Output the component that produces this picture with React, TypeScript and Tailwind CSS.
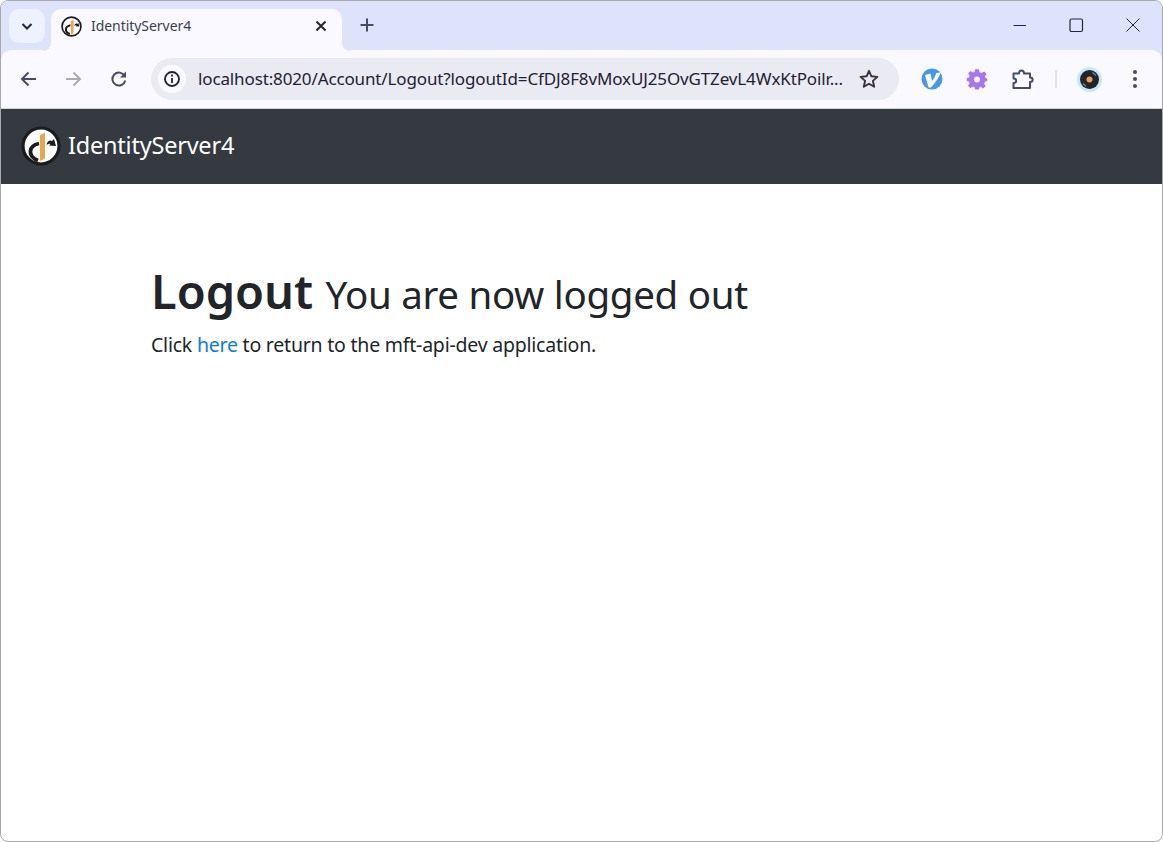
const ICON = "#474b68";

function Logo({ size }: { size: number }) {
  return (
    <svg width={size} height={size} viewBox="0 0 40 40" className="shrink-0">
      <circle cx="20" cy="20" r="18" fill="#fff" stroke="#1c1c1e" strokeWidth="3.2" />
      <path d="M18 17.5 C8 19.5 5.5 30 17 34.5" fill="none" stroke="#1c1c1e" strokeWidth="3.8" />
      <path d="M19 9 L24 6.5 L24 32.5 L19 35 Z" fill="#eda646" />
      <path d="M25.5 19 C26 15 29 13.5 31 15 L33 13 L35 20 L28 19.5 L29.5 18 C28 17.5 27 18 25.5 19 Z" fill="#1c1c1e" />
    </svg>
  );
}

function Tab() {
  return (
    <div className="relative ml-[6px] mt-2 flex h-[42px] w-[291px] items-center rounded-t-[10px] bg-[#f9f9ff] pb-2 pl-[10px] pr-[11px]">
      <div className="absolute bottom-0 left-[-8px] h-2 w-2 bg-[#f9f9ff]">
        <div className="h-2 w-2 rounded-br-[8px] bg-[#dde3fb]" />
      </div>
      <div className="absolute bottom-0 right-[-8px] h-2 w-2 bg-[#f9f9ff]">
        <div className="h-2 w-2 rounded-bl-[8px] bg-[#dde3fb]" />
      </div>
      <Logo size={21} />
      <span className="ml-[9px] flex-1 text-[14px] leading-none tracking-[-0.05px] text-[#3c3f4f]">IdentityServer4</span>
      <svg width="20" height="20" viewBox="0 0 20 20" fill="none" stroke="#23253a" strokeWidth="2">
        <path d="M5.5 5.5 L14.5 14.5 M14.5 5.5 L5.5 14.5" />
      </svg>
    </div>
  );
}

function TabStrip() {
  return (
    <div className="flex h-[49px] items-start bg-[#dde3fb]">
      <div className="ml-[8px] mt-2 flex h-[34px] w-[36px] items-center justify-center rounded-[10px] bg-[#eef1fe]">
        <svg width="16" height="16" viewBox="0 0 16 16" fill="none" stroke="#23253a" strokeWidth="2">
          <path d="M3.5 6 L8 10.5 L12.5 6" />
        </svg>
      </div>
      <Tab />
      <div className="ml-2 mt-[7px] flex h-[34px] w-[34px] items-center justify-center">
        <svg width="16" height="16" viewBox="0 0 16 16" fill="none" stroke={ICON} strokeWidth="2">
          <path d="M8 1.5 V14.5 M1.5 8 H14.5" />
        </svg>
      </div>
      <div className="ml-auto mr-px flex">
        <div className="flex h-[48px] w-[57px] items-center justify-center">
          <svg width="16" height="16" viewBox="0 0 16 16" fill="none" stroke="#23253a" strokeWidth="1">
            <path d="M2.5 8.5 H15" />
          </svg>
        </div>
        <div className="flex h-[48px] w-[57px] items-center justify-center">
          <svg width="16" height="16" viewBox="0 0 16 16" fill="none" stroke="#23253a" strokeWidth="1.2">
            <rect x="2" y="2" width="12.5" height="12.5" rx="1.5" />
          </svg>
        </div>
        <div className="flex h-[48px] w-[57px] items-center justify-center">
          <svg width="16" height="16" viewBox="0 0 16 16" fill="none" stroke="#23253a" strokeWidth="1">
            <path d="M1.5 1.5 L14.5 14.5 M14.5 1.5 L1.5 14.5" />
          </svg>
        </div>
      </div>
    </div>
  );
}

function Toolbar() {
  return (
    <div className="bg-[#dde3fb]">
      <div className="flex h-[59px] items-center rounded-t-[10px] border-b border-[#d5d5dc] bg-[#f9f9ff] pl-[10px] pr-[10px]">
        <div className="flex h-[36px] w-[36px] items-center justify-center">
          <svg width="20" height="20" viewBox="0 0 20 20" fill="none" stroke={ICON} strokeWidth="2">
            <path d="M17 10 H3.5 M9.5 3.5 L3 10 L9.5 16.5" />
          </svg>
        </div>
        <div className="ml-2 flex h-[36px] w-[36px] items-center justify-center">
          <svg width="20" height="20" viewBox="0 0 20 20" fill="none" stroke="#a9aab4" strokeWidth="2">
            <path d="M3 10 H16.5 M10.5 3.5 L17 10 L10.5 16.5" />
          </svg>
        </div>
        <div className="ml-[10px] flex h-[36px] w-[36px] items-center justify-center">
          <svg width="20" height="20" viewBox="0 0 20 20" fill="none" stroke={ICON} strokeWidth="2">
            <path d="M15.6 7 A6.5 6.5 0 1 0 16.2 11.5" />
            <path d="M17 2.5 V8.5 H11" fill={ICON} stroke="none" />
          </svg>
        </div>
        <div className="ml-[14px] flex h-[42px] w-[748px] items-center rounded-full bg-[#eaeaf2] pl-[7px] pr-[19px]">
          <div className="flex h-[28px] w-[28px] shrink-0 items-center justify-center rounded-full bg-[#f9f9ff]">
            <svg width="18" height="18" viewBox="0 0 18 18" fill="none" stroke="#1f2033" strokeWidth="1.8">
              <circle cx="9" cy="9" r="7" />
              <path d="M9 8 V13" />
              <path d="M9 4.6 V6.4" />
            </svg>
          </div>
          <span className="ml-3 flex-1 truncate whitespace-nowrap text-[17px] tracking-[-0.13px] text-[#1f2033]">
            localhost:8020/Account/Logout?logoutId=CfDJ8F8vMoxUJ25OvGTZevL4WxKtPoilr...
          </span>
          <svg width="22" height="22" viewBox="0 0 22 22" fill="none" stroke="#3b3038" strokeWidth="1.9" className="ml-[15px] shrink-0">
            <path d="M11 2.8 L13.4 8.3 L19.4 8.9 L14.9 12.9 L16.2 18.8 L11 15.7 L5.8 18.8 L7.1 12.9 L2.6 8.9 L8.6 8.3 Z" strokeLinejoin="round" />
          </svg>
        </div>
        <div className="ml-[21px] flex h-[24px] w-[24px] items-center justify-center">
          <svg width="22" height="22" viewBox="0 0 22 22">
            <circle cx="11" cy="11" r="10.5" fill="#4399ea" />
            <path d="M4 7 L9.5 5.5 L11 13 C13 10.5 15 7.5 15 5 L19.5 4.5 C18.5 9 14 15 10 19.5 L7.5 19.5 Z" fill="#fff" />
          </svg>
        </div>
        <div className="ml-[21px] flex h-[24px] w-[24px] items-center justify-center">
          <svg width="22" height="22" viewBox="0 0 22 22">
            <path fillRule="evenodd" fill="#a873f5" d="M9 1.2 H13 L13.6 4.2 L15.6 5 L18.2 3.4 L20.6 6 L18.8 8.4 L19.6 10 L21.2 10.6 V13 L18.9 13.8 L18.2 15.6 L19.6 18.2 L17.2 20.4 L14.8 18.8 L13.2 19.4 L12.8 21.6 H9.2 L8.6 19.2 L6.8 18.6 L4.4 20.2 L2 17.8 L3.6 15.4 L2.9 13.6 L0.8 13 V10 L3 9.4 L3.7 7.6 L2.2 5.2 L4.6 3 L7 4.6 L8.6 3.9 Z M11 8.4 A3 3 0 1 0 11 14.4 A3 3 0 1 0 11 8.4 Z" />
          </svg>
        </div>
        <div className="ml-[21px] flex h-[24px] w-[24px] items-center justify-center">
          <svg width="24" height="24" viewBox="0 0 24 24" fill="none" stroke={ICON} strokeWidth="2" strokeLinejoin="round">
            <path d="M3.5 6.5 H9 C9 2.5 14 2.5 14 6.5 H20 V10.5 C23.5 10.5 23.5 15 20 15 V21 H3.5 V16 C7 16 7 11.5 3.5 11.5 Z" />
          </svg>
        </div>
        <div className="ml-[21px] h-[18px] w-[2px] bg-[#dde3fb]" />
        <div className="ml-[20px] flex h-[25px] w-[25px] items-center justify-center">
          <svg width="25" height="25" viewBox="0 0 25 25">
            <circle cx="12.5" cy="12.5" r="12.5" fill="#c5e9fb" />
            <circle cx="12.5" cy="12.5" r="9.5" fill="#23242c" />
            <path d="M15.5 5.5 L19 8.5" stroke="#7a7b88" strokeWidth="1.4" />
            <path d="M6 16.5 L9 19.5" stroke="#7a7b88" strokeWidth="1.4" />
            <circle cx="12.5" cy="12.5" r="3" fill="#f0a050" />
          </svg>
        </div>
        <div className="ml-[21px] flex h-[24px] w-[24px] flex-col items-center justify-center gap-[3px]">
          <div className="h-[4px] w-[4px] rounded-full bg-[#474b68]" />
          <div className="h-[4px] w-[4px] rounded-full bg-[#474b68]" />
          <div className="h-[4px] w-[4px] rounded-full bg-[#474b68]" />
        </div>
      </div>
    </div>
  );
}

export default function App() {
  return (
    <div className="h-[842px] w-[1163px] overflow-hidden rounded-[8px] border border-[#a8a8a8] bg-white font-['Noto_Sans',sans-serif] text-[#212529]">
      <TabStrip />
      <Toolbar />
      <nav className="flex h-[75px] items-center bg-[#343a40] pb-[2px] pl-5">
        <Logo size={40} />
        <span className="ml-[7px] text-[23.5px] tracking-[-0.22px] text-white">IdentityServer4</span>
      </nav>
      <main className="pl-[150px] pt-[72px]">
        <h1 className="whitespace-nowrap text-[47px] font-semibold leading-[70px]">
          Logout{" "}
          <span className="text-[38.5px] font-normal tracking-[-0.3px]">You are now logged out</span>
        </h1>
        <p className="mt-px text-[19.5px] leading-[30px] tracking-[-0.22px]">
          Click <a className="text-[#007bff]">here</a> to return to the mft-api-dev application.
        </p>
      </main>
    </div>
  );
}
